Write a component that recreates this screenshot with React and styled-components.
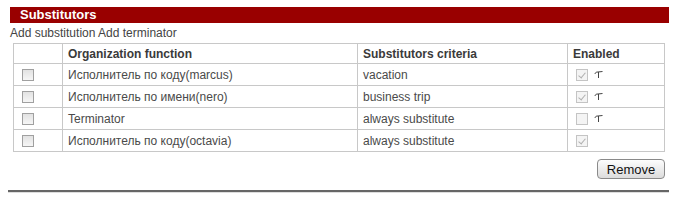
import styled, { createGlobalStyle } from "styled-components";

const GlobalStyle = createGlobalStyle`
  body {
    margin: 0;
    background: #fff;
    font-family: "Liberation Sans", Arial, sans-serif;
  }
`;

const rows = [
  { name: "Исполнитель по коду(marcus)", criteria: "vacation", enabled: true, mark: true },
  { name: "Исполнитель по имени(nero)", criteria: "business trip", enabled: true, mark: true },
  { name: "Terminator", criteria: "always substitute", enabled: false, mark: true },
  { name: "Исполнитель по коду(octavia)", criteria: "always substitute", enabled: true, mark: false },
];

const Marker = () => (
  <svg width="9" height="9" viewBox="0 0 9 9">
    <path d="M1 4 C1.3 2.6 2 2.2 3 2.1 L8.5 1.5" stroke="#444" strokeWidth="1" fill="none" />
    <path d="M4.5 2 L4.5 8" stroke="#444" strokeWidth="1" fill="none" />
  </svg>
);

const App = () => {
  return (
    <Page>
      <GlobalStyle />
      <TitleBar>Substitutors</TitleBar>
      <Actions>
        <ActionLink>Add substitution</ActionLink> <ActionLink>Add terminator</ActionLink>
      </Actions>
      <Table>
        <colgroup>
          <col style={{ width: 49 }} />
          <col style={{ width: 295 }} />
          <col style={{ width: 210 }} />
          <col />
        </colgroup>
        <thead>
          <tr>
            <Th />
            <Th>Organization function</Th>
            <Th>Substitutors criteria</Th>
            <Th>Enabled</Th>
          </tr>
        </thead>
        <tbody>
          {rows.map((row, i) => (
            <tr key={i}>
              <Td $pad={8}>
                <Check type="checkbox" />
              </Td>
              <Td>{row.name}</Td>
              <Td>{row.criteria}</Td>
              <Td $pad={8}>
                <EnabledCell>
                  <Check type="checkbox" checked={row.enabled} disabled readOnly />
                  {row.mark && <Marker />}
                </EnabledCell>
              </Td>
            </tr>
          ))}
        </tbody>
      </Table>
      <ButtonRow>
        <Button>Remove</Button>
      </ButtonRow>
      <Rule />
    </Page>
  );
};

export default App;

const Page = styled.div`
  width: 661px;
  padding: 7px 0 0 8px;
`;

const TitleBar = styled.div`
  margin-left: 2px;
  height: 16px;
  line-height: 16px;
  background: #990000;
  color: #fff;
  font-size: 13px;
  font-weight: bold;
  padding-left: 10px;
`;

const Actions = styled.div`
  margin-left: 2px;
  margin-top: 3px;
  font-size: 12px;
  line-height: 15px;
  color: #444;
`;

const ActionLink = styled.span`
  cursor: pointer;
`;

const Table = styled.table`
  margin: 2px 0 0 5px;
  width: 652px;
  border-collapse: collapse;
  table-layout: fixed;
  font-size: 12px;
  color: #4a4a4a;
`;

const Th = styled.th`
  border: 1px solid #c8c8c8;
  height: 19px;
  padding: 0 5px;
  text-align: left;
  font-weight: bold;
  color: #3a3a3a;
`;

const Td = styled.td`
  border: 1px solid #c8c8c8;
  height: 21px;
  padding: 0 5px 0 ${(props) => props.$pad || 5}px;
  text-align: left;
`;

const EnabledCell = styled.div`
  display: flex;
  align-items: center;
  gap: 6px;
`;

const Check = styled.input`
  appearance: none;
  display: block;
  box-sizing: border-box;
  width: 12px;
  height: 12px;
  margin: 0;
  border: 1px solid ${(props) => (props.disabled ? "#c4c4c4" : "#a0a0a0")};
  background: ${(props) =>
    props.disabled ? "#f4f4f4" : "linear-gradient(#e2e2e2, #f6f6f6)"};
  position: relative;

  &:checked::after {
    content: "";
    position: absolute;
    left: 3px;
    top: 1px;
    width: 3px;
    height: 6px;
    border: solid #b0b0b0;
    border-width: 0 1px 1px 0;
    transform: rotate(40deg);
  }
`;

const ButtonRow = styled.div`
  display: flex;
  justify-content: flex-end;
  padding: 7px 4px 0 0;
`;

const Button = styled.button`
  width: 68px;
  height: 20px;
  font-family: "Liberation Sans", Arial, sans-serif;
  font-size: 13px;
  color: #111;
  border: 1px solid #8a8a8a;
  border-radius: 4px;
  background: linear-gradient(#fdfdfd, #dcdcdc);
  padding: 0;
  cursor: pointer;
`;

const Rule = styled.div`
  margin-top: 11px;
  height: 2px;
  background: #666;
  border-bottom: 1px solid #ddd;
`;
